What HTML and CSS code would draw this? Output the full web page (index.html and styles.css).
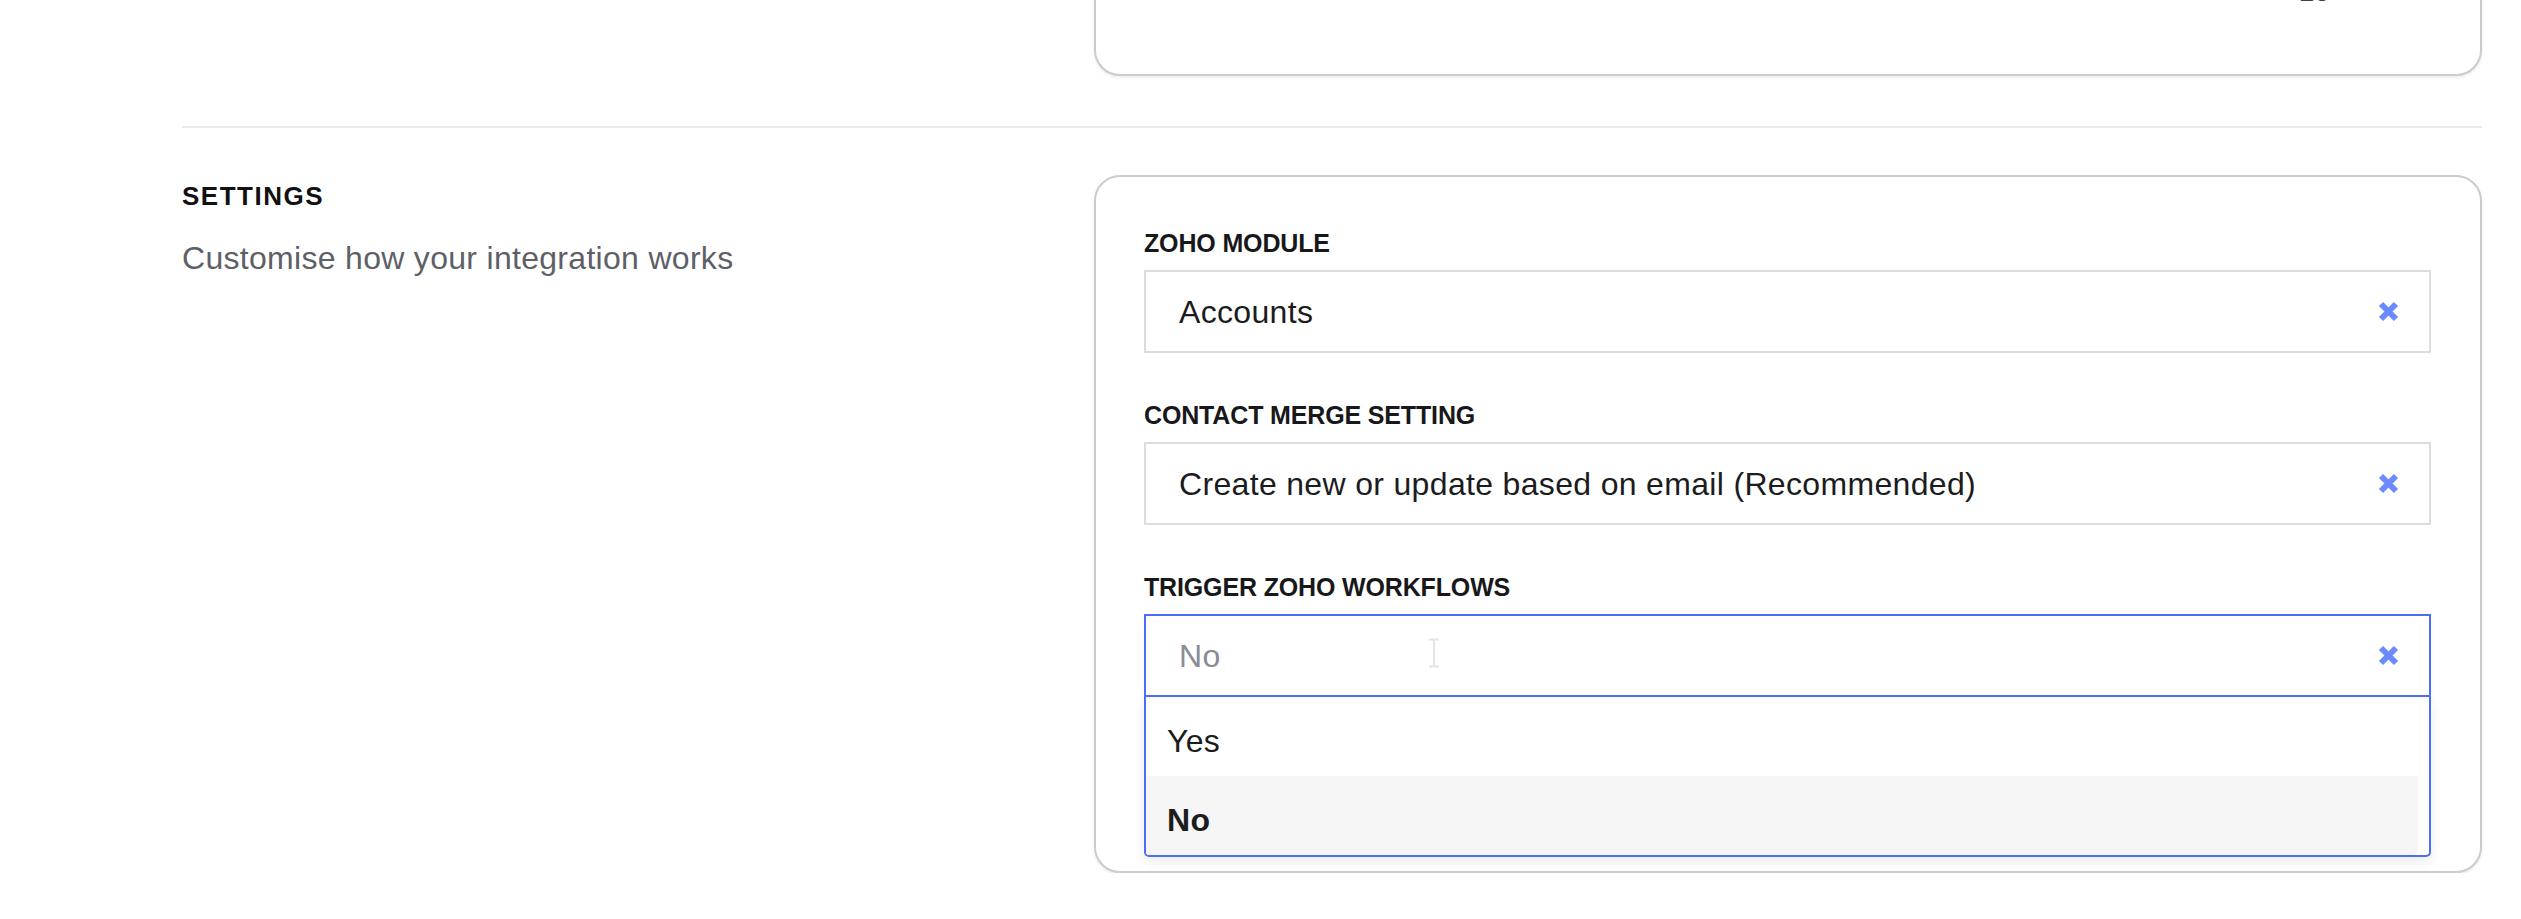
FILE: index.html
```html
<!DOCTYPE html>
<html lang="en">
<head>
<meta charset="utf-8">
<title>Integration settings</title>
<link rel="stylesheet" href="styles.css">
</head>
<body>
<div class="page">
  <section class="section section-top">
    <div class="side"></div>
    <div class="card card-top">
      <div class="top-row"><span class="top-value">15</span></div>
    </div>
  </section>

  <section class="section section-settings">
    <div class="side">
      <h2 class="side-title">SETTINGS</h2>
      <p class="side-desc">Customise how your integration works</p>
    </div>
    <div class="card card-settings">
      <div class="field">
        <div class="field-label">ZOHO MODULE</div>
        <div class="select">
          <span class="select-value">Accounts</span>
          <span class="select-clear"><svg viewBox="0 0 21 21" width="21" height="21"><path d="M3 3L18 18M18 3L3 18" stroke="#6b8afd" stroke-width="6" fill="none"/></svg></span>
        </div>
      </div>
      <div class="field">
        <div class="field-label">CONTACT MERGE SETTING</div>
        <div class="select">
          <span class="select-value">Create new or update based on email (Recommended)</span>
          <span class="select-clear"><svg viewBox="0 0 21 21" width="21" height="21"><path d="M3 3L18 18M18 3L3 18" stroke="#6b8afd" stroke-width="6" fill="none"/></svg></span>
        </div>
      </div>
      <div class="field field-last">
        <div class="field-label">TRIGGER ZOHO WORKFLOWS</div>
        <div class="select select-focused">
          <span class="select-value placeholder">No</span>
          <span class="select-clear"><svg viewBox="0 0 21 21" width="21" height="21"><path d="M3 3L18 18M18 3L3 18" stroke="#6b8afd" stroke-width="6" fill="none"/></svg></span>
          <svg class="ibeam" viewBox="0 0 14 30" width="14" height="30"><path d="M2 1.5H12M7 1.5V28.5M2 28.5H12" stroke="#e4e4e7" stroke-width="2" fill="none"/></svg>
        </div>
        <ul class="menu">
          <li class="option">Yes</li>
          <li class="option option-active">No</li>
        </ul>
      </div>
    </div>
  </section>
</div>
</body>
</html>
```

FILE: styles.css
```css
html, body {
  margin: 0;
  padding: 0;
  background: #ffffff;
}

body {
  font-family: "Liberation Sans", Arial, sans-serif;
  color: #1c1c1e;
  overflow: hidden;
}

.page {
  padding: 0 39px 0 182px;
}

.section {
  display: grid;
  grid-template-columns: 912px 1388px;
}

.section-top {
  margin-top: -74px;
  padding-bottom: 50px;
}

.section-settings {
  border-top: 2px solid #e8eaee;
  padding-top: 47px;
}

.card {
  box-sizing: border-box;
  border: 2px solid #cbcbd0;
  border-radius: 26px;
  background: #ffffff;
  box-shadow: 0 2px 3px rgba(0, 0, 0, 0.07);
}

.card-top {
  padding: 48px 150px 66px 48px;
}

.top-row {
  display: flex;
  justify-content: flex-end;
}

.top-value {
  font-size: 28px;
  line-height: 32px;
  color: #3f3f46;
}

.side {
  padding-top: 6px;
}

.side-title {
  margin: 0;
  font-size: 26px;
  line-height: 31px;
  font-weight: 700;
  letter-spacing: 1.5px;
  color: #111113;
}

.side-desc {
  margin: 22px 0 0;
  font-size: 32px;
  line-height: 48px;
  letter-spacing: 0.3px;
  color: #5e5f67;
}

.card-settings {
  padding: 51px 49px 14px 48px;
}

.field {
  margin-bottom: 47px;
}

.field-last {
  margin-bottom: 0;
}

.field-label {
  font-size: 25px;
  line-height: 30px;
  font-weight: 700;
  letter-spacing: -0.15px;
  color: #18181b;
  margin-bottom: 12px;
}

.select {
  position: relative;
  box-sizing: border-box;
  height: 83px;
  border: 2px solid #dddddd;
  display: flex;
  align-items: center;
  padding: 0 30px 0 33px;
  background: #ffffff;
}

.select-focused {
  border-color: #4b6ef5;
  box-shadow: 0 2px 8px rgba(0, 0, 0, 0.04);
}

.select-value {
  flex: 1;
  font-size: 32px;
  line-height: 32px;
  letter-spacing: 0.33px;
  color: #1c1c1e;
  white-space: nowrap;
}

.placeholder {
  color: #8b8b96;
}

.select-clear {
  display: flex;
  width: 21px;
  height: 21px;
}

.ibeam {
  position: absolute;
  left: 281px;
  top: 22px;
}

.menu {
  list-style: none;
  margin: 0;
  padding: 0;
  box-sizing: border-box;
  border: 2px solid #4b6ef5;
  border-top: 0;
  border-radius: 0 0 5px 5px;
  background: #ffffff;
  box-shadow: 0 -1px 0 #f4f4f5, 0 5px 12px rgba(0, 0, 0, 0.08);
  overflow: hidden;
}

.option {
  font-size: 32px;
  line-height: 32px;
  letter-spacing: 0.3px;
  padding: 28px 21px 19px;
  margin-right: 11px;
  color: #1c1c1e;
}

.option-active {
  background: #f5f5f5;
  font-weight: 700;
  border-radius: 0 0 6px 0;
}
```
